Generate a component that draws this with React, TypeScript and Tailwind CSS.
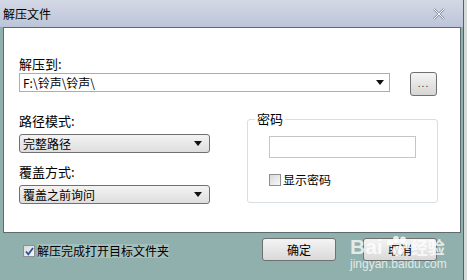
import React from "react";

const cjk = { fontFamily: '"Noto Sans CJK SC", "Liberation Sans", sans-serif' };

function Arrow() {
  return (
    <svg width="8" height="5" viewBox="0 0 8 5" className="shrink-0">
      <path d="M0 0h8L4 5z" fill="#111" />
    </svg>
  );
}

function Select({ label }: { label: string }) {
  return (
    <div className="flex h-[19px] w-[191px] items-center justify-between rounded-[3px] border border-[#707070] bg-gradient-to-b from-[#f3f3f3] to-[#dedede] pl-[3px] pr-[7px] text-[12px] leading-none text-black">
      <span>{label}</span>
      <Arrow />
    </div>
  );
}

function CheckBox({ checked }: { checked?: boolean }) {
  return (
    <div className="flex h-[12px] w-[12px] shrink-0 items-center justify-center border border-[#8e8f8f] bg-gradient-to-br from-[#d9d9d9] to-[#f7f7f7]">
      {checked && (
        <svg width="9" height="9" viewBox="0 0 9 9">
          <path d="M1 4.5l2.3 2.8L8 1" stroke="#2a4fa0" strokeWidth="1.8" fill="none" />
        </svg>
      )}
    </div>
  );
}

function Button({ label }: { label: string }) {
  return (
    <div className="flex h-[23px] w-[74px] items-center justify-center rounded-[3px] border border-[#707070] bg-gradient-to-b from-[#f4f4f4] to-[#d9d9d9] text-[12px] text-black">
      {label}
    </div>
  );
}

export default function App() {
  return (
    <div className="relative flex h-[280px] w-[467px] overflow-hidden bg-[#8fb0ac]" style={cjk}>
      <div className="flex w-[463px] flex-col">
        <div className="flex h-[27px] items-center justify-between bg-gradient-to-b from-[#d3d8e5] to-[#bcc5d8] pl-[3px] pr-[17px]">
          <span className="text-[12px] text-black">解压文件</span>
          <svg width="14" height="12" viewBox="0 0 14 12">
            <path d="M2 1l10 10M12 1L2 11" stroke="#8e97aa" strokeWidth="2.4" />
            <path d="M2 1l10 10M12 1L2 11" stroke="#f4f6fa" strokeWidth="1" />
          </svg>
        </div>

        <div className="ml-[3px] h-[206px] w-[458px] border border-[#5f6b70] bg-white pl-[15px]">
          <div className="pt-[28px] text-[13px] leading-[16px] text-black">解压到:</div>
          <div className="mt-[1px] flex items-start">
            <div className="flex h-[19px] w-[371px] items-center justify-between border border-[#abadb3] pl-[3px] pr-[5px] text-[12px] leading-none text-black">
              <span>F:\铃声\铃声\</span>
              <Arrow />
            </div>
            <div className="-mt-[1px] ml-[20px] flex h-[24px] w-[27px] items-center justify-center rounded-[3px] border border-[#707070] bg-gradient-to-b from-[#f4f4f4] to-[#d6d6d6] pb-[3px] text-[10px] tracking-[1px] text-[#333]">
              ...
            </div>
          </div>

          <div className="mt-[17px] flex items-start">
            <div className="flex flex-col">
              <div className="text-[13px] leading-[16px] text-black">路径模式:</div>
              <div className="mt-[5px]">
                <Select label="完整路径" />
              </div>
              <div className="mt-[11px] text-[13px] leading-[16px] text-black">覆盖方式:</div>
              <div className="mt-[5px]">
                <Select label="覆盖之前询问" />
              </div>
            </div>

            <div className="relative ml-[37px] mt-[6px] h-[84px] w-[191px] rounded-[3px] border border-[#d5dfe5]">
              <span className="absolute -top-[9px] left-[7px] bg-white px-[2px] text-[13px] leading-[16px] text-black">
                密码
              </span>
              <div className="ml-[21px] mt-[16px] h-[22px] w-[147px] border border-[#c5c5c5] bg-white" />
              <div className="ml-[21px] mt-[15px] flex items-center gap-[2px] text-[12px] leading-[14px] text-black">
                <CheckBox />
                <span>显示密码</span>
              </div>
            </div>
          </div>
        </div>

        <div className="flex items-start pl-[23px] pr-[26px] pt-[5px]">
          <div className="mt-[6px] flex items-center gap-[2px] text-[12px] leading-[14px] text-black">
            <CheckBox checked />
            <span className="bg-white/20">解压完成打开目标文件夹</span>
          </div>
          <div className="ml-auto flex gap-[27px]">
            <Button label="确定" />
            <Button label="取消" />
          </div>
        </div>
      </div>
      <div className="w-[4px] border-l border-[#55625f] bg-[#d4dbd9]" />

      <div className="pointer-events-none absolute left-[350px] top-[236px] flex flex-col text-white/75">
        <div className="flex items-center gap-[1px]">
          <span className="text-[21px] font-bold leading-[22px]" style={{ fontFamily: '"Liberation Sans", sans-serif' }}>
            Bai
          </span>
          <svg width="26" height="22" viewBox="0 0 26 22">
            <g fill="rgba(255,255,255,0.8)">
              <ellipse cx="6" cy="7" rx="3" ry="3.6" />
              <ellipse cx="12" cy="3.5" rx="3" ry="3.4" />
              <ellipse cx="19" cy="4" rx="3" ry="3.4" />
              <ellipse cx="23" cy="10" rx="2.6" ry="3" />
              <ellipse cx="14" cy="15" rx="6" ry="5" />
            </g>
          </svg>
          <span className="text-[17px] font-bold leading-[22px]">经验</span>
        </div>
        <span className="text-[12px] leading-[13px]" style={{ fontFamily: '"Liberation Sans", sans-serif' }}>
          jingyan.baidu.com
        </span>
      </div>
    </div>
  );
}
